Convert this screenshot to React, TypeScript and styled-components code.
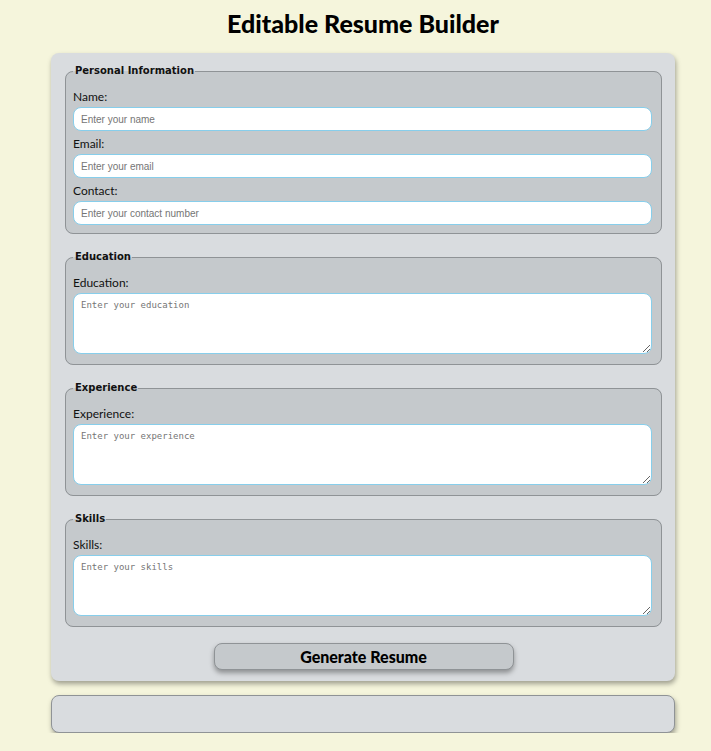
import React from "react";
import styled, { createGlobalStyle } from "styled-components";

const GlobalStyle = createGlobalStyle`
  html, body {
    margin: 0;
    padding: 0;
    background: #f5f5dc;
  }
  body {
    font-family: "Lato", "Open Sans", sans-serif;
  }
`;

const Page = styled.div`
  width: 711px;
  box-sizing: border-box;
  padding: 8px 0 0 15px;
  display: flex;
  flex-direction: column;
  align-items: center;
`;

const Title = styled.h1`
  margin: 0 0 15px;
  font-family: "Lato", sans-serif;
  font-weight: 900;
  font-size: 25px;
  line-height: 30px;
  color: #000;
  text-align: center;
`;

const Card = styled.div`
  width: 624px;
  box-sizing: border-box;
  background: #d9dcdf;
  border-radius: 8px;
  box-shadow: 1px 3px 5px rgba(0, 0, 0, 0.35);
  padding: 11px 13px 11px 14px;
  display: flex;
  flex-direction: column;
  gap: 16px;
`;

const Section = styled.fieldset`
  margin: 0;
  padding: 10px 9px 4px 7px;
  border: 1px solid #8f9396;
  border-radius: 8px;
  background: #c5c9cc;
  min-width: 0;
`;

const Legend = styled.legend`
  padding: 0 1px 0 2px;
  font-family: "DejaVu Sans", Verdana, sans-serif;
  font-weight: 700;
  font-size: 10px;
  line-height: 14px;
  color: #111;
`;

const Label = styled.label`
  display: block;
  font-family: "Lato", sans-serif;
  font-size: 12px;
  line-height: 15px;
  padding-top: 1px;
  margin-bottom: 3px;
  color: #111;
`;

const TextInput = styled.input`
  display: block;
  width: 100%;
  box-sizing: border-box;
  height: 24px;
  margin: 0 0 4px;
  padding: 0 7px;
  border: 1px solid #87ceeb;
  border-radius: 8px;
  background: #fff;
  font-family: "Liberation Sans", Arial, sans-serif;
  font-size: 10px;
  outline: none;
  &::placeholder {
    color: #757575;
  }
`;

const TextArea = styled.textarea`
  display: block;
  width: 100%;
  box-sizing: border-box;
  height: 61px;
  margin: 0 0 6px;
  padding: 6px 7px;
  border: 1px solid #87ceeb;
  border-radius: 8px;
  background: #fff;
  font-family: "DejaVu Sans Mono", monospace;
  font-size: 9px;
  outline: none;
  &::placeholder {
    color: #757575;
  }
`;

const Actions = styled.div`
  display: flex;
  justify-content: center;
`;

const Button = styled.button`
  width: 300px;
  height: 27px;
  border: 1px solid #8f9396;
  border-radius: 8px;
  background: #c5c9cc;
  box-shadow: 0 3px 5px rgba(0, 0, 0, 0.35);
  font-family: "Lato", sans-serif;
  font-weight: 900;
  font-size: 16px;
  color: #000;
  cursor: pointer;
`;

const Output = styled.div`
  margin-top: 14px;
  width: 624px;
  height: 38px;
  box-sizing: border-box;
  background: #d9dcdf;
  border: 1px solid #8f9396;
  border-radius: 8px;
  box-shadow: 1px 3px 5px rgba(0, 0, 0, 0.35);
`;

type FieldProps = { id: string; label: string; placeholder: string; multiline?: boolean };

const Field = ({ id, label, placeholder, multiline }: FieldProps) => (
  <>
    <Label htmlFor={id}>{label}</Label>
    {multiline ? (
      <TextArea id={id} placeholder={placeholder} />
    ) : (
      <TextInput id={id} placeholder={placeholder} />
    )}
  </>
);

export default function App() {
  return (
    <>
      <GlobalStyle />
      <Page>
        <Title>Editable Resume Builder</Title>
        <Card>
          <Section>
            <Legend>Personal Information</Legend>
            <Field id="name" label="Name:" placeholder="Enter your name" />
            <Field id="email" label="Email:" placeholder="Enter your email" />
            <Field id="contact" label="Contact:" placeholder="Enter your contact number" />
          </Section>
          <Section>
            <Legend>Education</Legend>
            <Field id="education" label="Education:" placeholder="Enter your education" multiline />
          </Section>
          <Section>
            <Legend>Experience</Legend>
            <Field id="experience" label="Experience:" placeholder="Enter your experience" multiline />
          </Section>
          <Section>
            <Legend>Skills</Legend>
            <Field id="skills" label="Skills:" placeholder="Enter your skills" multiline />
          </Section>
          <Actions>
            <Button type="button">Generate Resume</Button>
          </Actions>
        </Card>
        <Output />
      </Page>
    </>
  );
}
